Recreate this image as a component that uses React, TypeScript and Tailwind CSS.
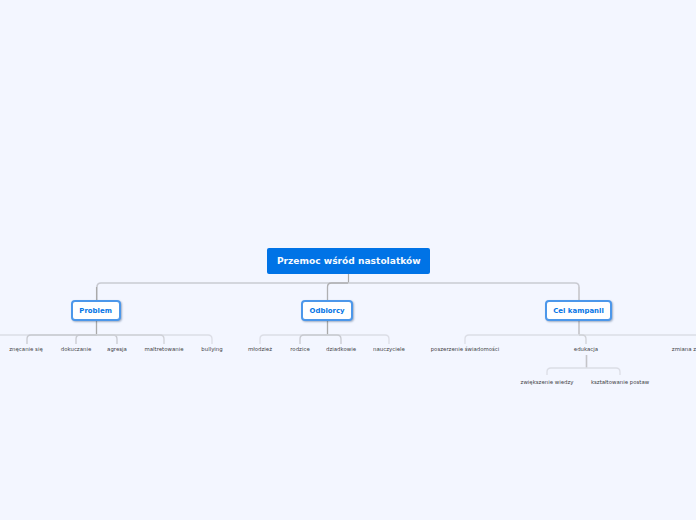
const font = "[font-family:'DejaVu_Sans',sans-serif]";

function Leaf({ x, y, children }: { x: number; y: number; children: string }) {
  return (
    <span
      className="absolute -translate-x-1/2 scale-50 whitespace-nowrap text-[10.8px] leading-[8px] text-[#3a3a40] opacity-[0.97]"
      style={{ left: x, top: y + 0.5 }}
    >
      {children}
    </span>
  );
}

function Branch({ x, y, w, children }: { x: number; y: number; w: number; children: string }) {
  return (
    <div
      className="absolute flex h-[21px] items-center justify-center whitespace-nowrap rounded-[4px] border-2 border-[#4c97ea] bg-white shadow-[1px_1px_2px_rgba(40,70,110,0.4)]"
      style={{ left: x, top: y, width: w }}
    >
      <span className="scale-50 text-[13.9px] font-bold text-[#0073e6] opacity-[0.97]">{children}</span>
    </div>
  );
}

export default function App() {
  return (
    <div className={`relative h-[520px] w-[696px] overflow-hidden bg-[#f3f6ff] ${font}`}>
      <svg className="absolute inset-0" width="696" height="520" fill="none">
        <g stroke="#c9cbd2" strokeWidth="1.6">
          <path d="M348.5 274V283" stroke="#a9a9a9" strokeWidth="1.2" />
          <path d="M97 301V287Q97 283 101 283H575Q579 283 579 287V301" />
          <path d="M327.5 301V287Q327.5 283 331.5 283H348" stroke="#b0b0b2" strokeWidth="1.3" />
          <path d="M96.5 301V287" stroke="#aaaaaa" strokeWidth="1.1" />
          <path d="M579 301V287" stroke="#cfcfd3" />
        </g>
        <g strokeWidth="1.3">
          <path d="M96.5 321V335" stroke="#a9a9a9" />
          <path d="M327.5 321V335" stroke="#a9a9a9" />
          <path d="M579 321V335" stroke="#c4c4c8" strokeWidth="1.6" />
          <path d="M586.5 355V368" stroke="#c4c4c8" strokeWidth="1.6" />
        </g>
        <g stroke="#dcdee6" strokeWidth="1.3">
          <path d="M0 335H208Q212 335 212 339V344" />
          <path d="M27 344V339Q27 335 31 335H97" stroke="#c8cad0" />
          <path d="M76 344V339Q76 335 80 335H97" stroke="#c8cad0" />
          <path d="M97 335H113Q117 335 117 339V344" stroke="#c8cad0" />
          <path d="M97 335H160Q164 335 164 339V344" stroke="#d0d2d8" />
          <path d="M260 344V339Q260 335 264 335H385Q389 335 389 339V344" />
          <path d="M300 344V339Q300 335 304 335H327" stroke="#c8cad0" />
          <path d="M327 335H337Q341 335 341 339V344" stroke="#c8cad0" />
          <path d="M465 344V339Q465 335 469 335H696" />
          <path d="M579 335H582Q586 335 586 339V344" stroke="#d0d2d8" />
          <path d="M547 375V372Q547 368 551 368H616Q620 368 620 372V375" />
        </g>
      </svg>

      <div className="absolute left-[267px] top-[248px] flex h-[26px] w-[163px] items-center justify-center whitespace-nowrap rounded-[2px] bg-[#0073e6]">
        <span className="scale-50 text-[18.2px] font-bold text-white opacity-[0.97]">Przemoc wśród nastolatków</span>
      </div>

      <Branch x={71} y={300} w={50}>Problem</Branch>
      <Branch x={301} y={300} w={52}>Odbiorcy</Branch>
      <Branch x={545} y={300} w={67}>Cel kampanii</Branch>

      <Leaf x={26} y={344}>znęcanie się</Leaf>
      <Leaf x={75.5} y={344}>dokuczanie</Leaf>
      <Leaf x={117} y={344}>agresja</Leaf>
      <Leaf x={164} y={344}>maltretowanie</Leaf>
      <Leaf x={211.5} y={344}>bullying</Leaf>
      <Leaf x={260} y={344}>młodzież</Leaf>
      <Leaf x={299.5} y={344}>rodzice</Leaf>
      <Leaf x={341} y={344}>dziadkowie</Leaf>
      <Leaf x={389} y={344}>nauczyciele</Leaf>
      <Leaf x={465} y={344}>poszerzenie świadomości</Leaf>
      <Leaf x={585.5} y={344}>edukacja</Leaf>
      <Leaf x={696} y={344}>zmiana zachowań</Leaf>
      <Leaf x={547} y={377}>zwiększenie wiedzy</Leaf>
      <Leaf x={620} y={377}>kształtowanie postaw</Leaf>
    </div>
  );
}
